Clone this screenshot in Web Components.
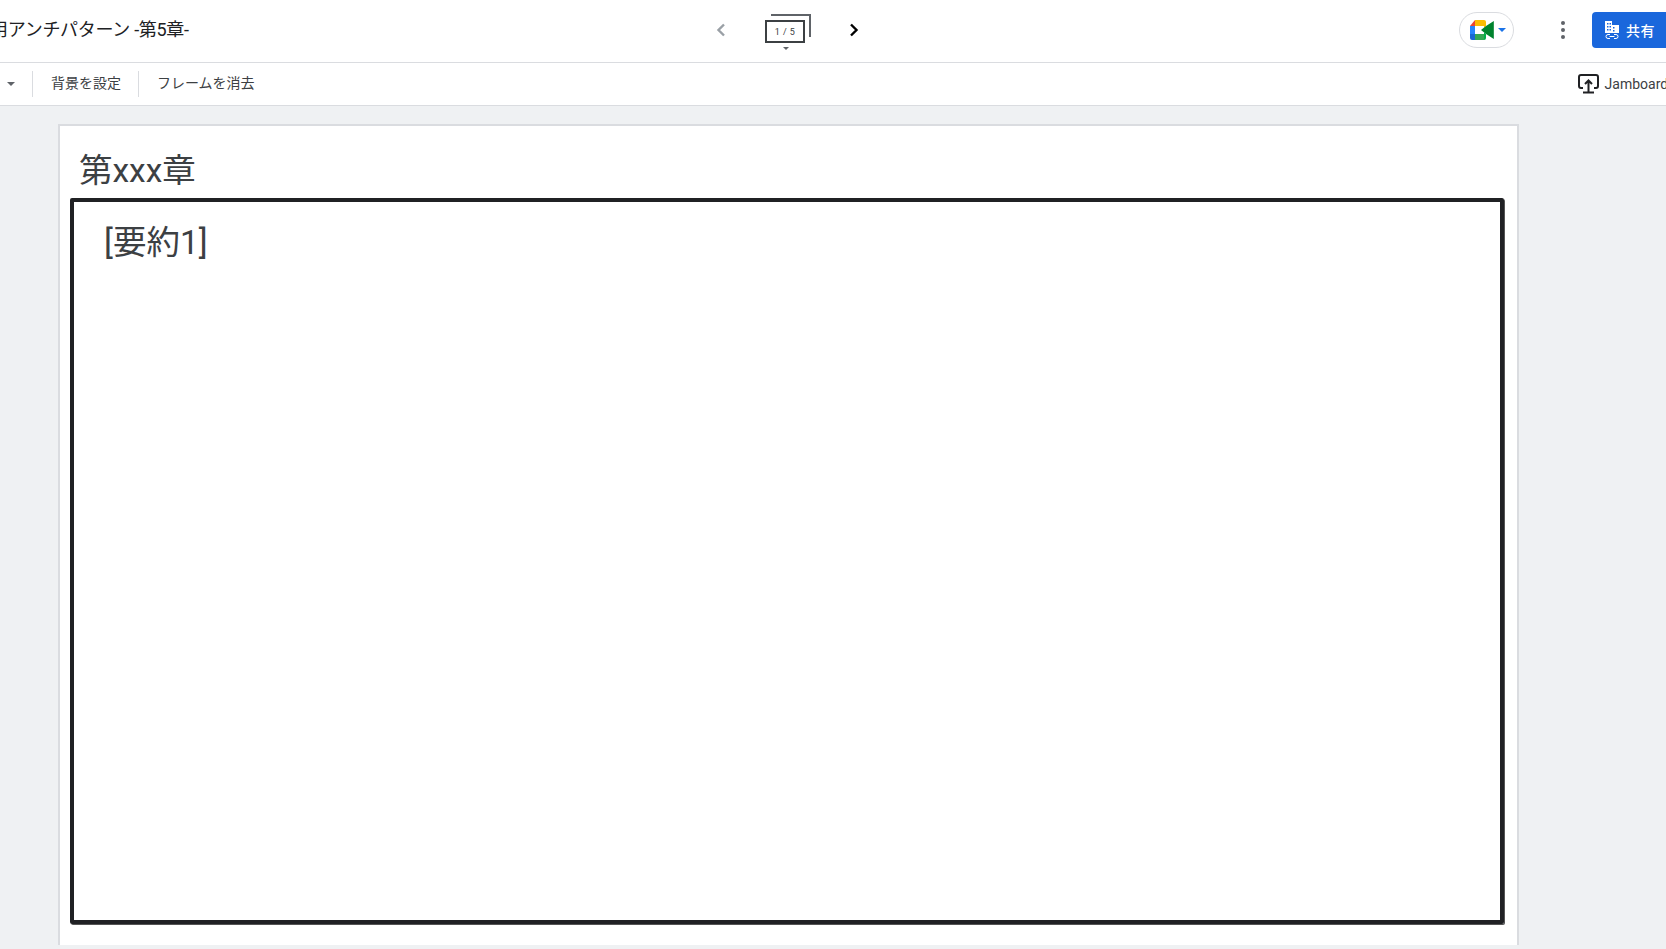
<!DOCTYPE html>
<html lang="ja">
<head>
<meta charset="utf-8">
<title>Jamboard</title>
<style>
  html, body { margin: 0; height: 100%; overflow: hidden; background: #eff1f3; }
  body { font-family: Roboto, "Noto Sans CJK JP", sans-serif; color: #3c4043; }
</style>
</head>
<body>
<jam-app>
  <jam-topbar slot="top" doc-title="用アンチパターン -第5章-" page="1 / 5"></jam-topbar>
  <jam-toolbar slot="tools">
    <span slot="actions">背景を設定</span>
    <span slot="actions">フレームを消去</span>
  </jam-toolbar>
  <jam-stage>
    <span slot="title">第xxx章</span>
    <span slot="body">[要約1]</span>
  </jam-stage>
</jam-app>

<script>
class JamApp extends HTMLElement {
  constructor() {
    super();
    this.attachShadow({ mode: 'open' });
    this.shadowRoot.innerHTML = `
      <style>
        :host {
          display: flex;
          flex-direction: column;
          width: 1666px;
          height: 949px;
          overflow: hidden;
        }
      </style>
      <slot name="top"></slot>
      <slot name="tools"></slot>
      <slot></slot>
    `;
  }
}

class JamTopbar extends HTMLElement {
  constructor() {
    super();
    this.attachShadow({ mode: 'open' });
    const title = this.getAttribute('doc-title');
    const page = this.getAttribute('page');
    this.shadowRoot.innerHTML = `
      <style>
        :host {
          display: flex;
          align-items: center;
          flex: none;
          height: 62px;
          background: #fff;
          border-bottom: 1px solid #dadce0;
          overflow: hidden;
        }
        #title {
          flex: none;
          width: 200px;
          height: 30px;
          margin: 0 0 3px -10px;
          font-size: 18px;
          line-height: 30px;
          letter-spacing: -0.3px;
          color: #202124;
          white-space: nowrap;
        }
        #nav {
          flex: none;
          display: flex;
          align-items: center;
          margin: 0 0 2px 525px;
        }
        #nav svg { display: block; }
        #frames {
          position: relative;
          width: 46px;
          height: 40px;
          margin: 0 37px 0 38px;
        }
        #frames .back {
          position: absolute;
          top: 4px;
          left: 6px;
          width: 38px;
          height: 21px;
          border: solid #5f6368;
          border-width: 2px 2px 0 0;
        }
        #frames .front {
          position: absolute;
          top: 10px;
          left: 0;
          width: 36px;
          height: 19px;
          border: 2px solid #3c4043;
          background: #fff;
          display: flex;
          align-items: center;
          justify-content: center;
          font-size: 9px;
          letter-spacing: 0.4px;
          color: #3c4043;
        }
        #frames .caret {
          position: absolute;
          top: 37px;
          left: 18px;
          border: 3px solid transparent;
          border-top: 3px solid #5f6368;
        }
        #meet {
          flex: none;
          box-sizing: border-box;
          display: flex;
          align-items: center;
          gap: 4px;
          width: 55px;
          height: 36px;
          margin: 0 0 2px 599px;
          padding-left: 10px;
          border: 1px solid #dadce0;
          border-radius: 18px;
        }
        #meet .caret {
          border: 4px solid transparent;
          border-top: 4px solid #1a73e8;
          border-bottom: 0;
        }
        #more {
          flex: none;
          display: flex;
          flex-direction: column;
          gap: 3px;
          margin: 0 0 2px 47px;
        }
        #more i {
          width: 4px;
          height: 4px;
          border-radius: 50%;
          background: #5f6368;
        }
        #share {
          flex: none;
          box-sizing: border-box;
          display: flex;
          align-items: center;
          gap: 7px;
          width: 90px;
          height: 36px;
          margin: 0 0 2px 27px;
          padding-left: 13px;
          background: #1a67dc;
          border-radius: 4px;
          color: #fff;
          font-size: 14px;
          font-weight: 500;
          letter-spacing: 0.5px;
        }
      </style>
      <div id="title">${title}</div>
      <div id="nav">
        <svg width="12" height="14" viewBox="0 0 12 14"><path d="M9 1.500 3.500 7 9 12.500" fill="none" stroke="#9aa0a6" stroke-width="2.400"/></svg>
        <div id="frames">
          <div class="back"></div>
          <div class="front">${page}</div>
          <div class="caret"></div>
        </div>
        <svg width="12" height="14" viewBox="0 0 12 14"><path d="M3 1.500 8.500 7 3 12.500" fill="none" stroke="#000" stroke-width="2.400"/></svg>
      </div>
      <div id="meet">
        <svg width="24" height="20" viewBox="0 0 24 20">
          <path d="M5 0h9v6H5z" fill="#fbbc04"/>
          <path d="M0 6 5 0v6z" fill="#ea4335"/>
          <path d="M0 6h5v8H0z" fill="#2684fc"/>
          <path d="M0 14h5v6H2a2 2 0 0 1-2-2z" fill="#1967d2"/>
          <path d="M5 14h9v6H5z" fill="#34a853"/>
          <path d="M14 0a2 2 0 0 1 2 2v4l-2 2V0z" fill="#fbbc04"/>
          <path d="M16 6 23.800 1v18L16 14l-5-4z" fill="#00832d"/>
          <path d="M14 12l2 2v4a2 2 0 0 1-2 2z" fill="#00ac47"/>
        </svg>
        <div class="caret"></div>
      </div>
      <div id="more"><i></i><i></i><i></i></div>
      <div id="share">
        <svg width="14" height="18" viewBox="0 0 14 18" fill="#fff">
          <path d="M0 0h7v4h7v8H0zM2 2v1.500h1.500V2zM4.500 2v1.500H6V2zM2 5v1.500h1.500V5zM4.500 5v1.500H6V5zM2 8v1.500h1.500V8zM4.500 8v1.500H6V8zM8 6v1.500h1.500V6zM8 9v1.500h1.500V9z" fill-rule="evenodd"/>
          <path d="M5 13.500H3a2 2 0 0 0 0 4h2M9 13.500h2a2 2 0 0 1 0 4H9M4.500 15.500h5" fill="none" stroke="#fff" stroke-width="1"/>
        </svg>
        <span>共有</span>
      </div>
    `;
  }
}

class JamToolbar extends HTMLElement {
  constructor() {
    super();
    this.attachShadow({ mode: 'open' });
    this.shadowRoot.innerHTML = `
      <style>
        :host {
          display: flex;
          align-items: center;
          flex: none;
          height: 42px;
          background: #fff;
          border-bottom: 1px solid #dadce0;
          overflow: hidden;
          font-size: 14px;
          color: #3c4043;
        }
        #caret {
          flex: none;
          margin-left: 7px;
          border: 4px solid transparent;
          border-top: 4px solid #5f6368;
          border-bottom: 0;
        }
        #actions {
          display: flex;
          align-items: center;
          flex: none;
          margin-left: 17px;
          height: 26px;
        }
        ::slotted(span) {
          display: flex;
          align-items: center;
          box-sizing: border-box;
          height: 26px;
          padding: 0 17px 4px 18px;
          border-left: 1px solid #dadce0;
        }
        #cast {
          flex: none;
          display: flex;
          align-items: center;
          gap: 6px;
          margin-left: 1306px;
          white-space: nowrap;
        }
        #cast span { margin-bottom: 1px; }
        #cast svg { display: block; }
      </style>
      <div id="caret"></div>
      <div id="actions"><slot name="actions"></slot></div>
      <div id="cast">
        <svg width="21" height="20" viewBox="0 0 21 20" fill="none" stroke="#202124" stroke-width="2">
          <path d="M5 14H3a2 2 0 0 1-2-2V3a2 2 0 0 1 2-2h15a2 2 0 0 1 2 2v9a2 2 0 0 1-2 2h-2"/>
          <path d="M10.500 18V7M7 10l3.500-3.500L14 10M5 18.500h11"/>
        </svg>
        <span>Jamboard</span>
      </div>
    `;
  }
}

class JamStage extends HTMLElement {
  constructor() {
    super();
    this.attachShadow({ mode: 'open' });
    this.shadowRoot.innerHTML = `
      <style>
        :host {
          display: block;
          flex: none;
          height: 844px;
          padding: 18px 0 0 58px;
          background: #eff1f3;
          box-sizing: border-box;
        }
        #sheet {
          box-sizing: border-box;
          display: flex;
          flex-direction: column;
          width: 1461px;
          height: 821px;
          padding: 0 12px 0 10px;
          background: #fff;
          border: solid #dadce0;
          border-width: 2px 2px 0 2px;
        }
        #title {
          height: 72px;
          flex: none;
          padding: 9px 0 0 9px;
          box-sizing: border-box;
          font-size: 33.500px;
          line-height: 72px;
          color: #3c4043;
        }
        #frame {
          box-sizing: border-box;
          width: 1434px;
          height: 726px;
          padding: 16px 0 0 30px;
          border: 4px solid #202124;
          border-radius: 2px;
          box-shadow: 1px 1px 0 #555;
          font-size: 33.500px;
          line-height: 50px;
          color: #3c4043;
        }
      </style>
      <div id="sheet">
        <div id="title"><slot name="title"></slot></div>
        <div id="frame"><slot name="body"></slot></div>
      </div>
    `;
  }
}

customElements.define('jam-app', JamApp);
customElements.define('jam-topbar', JamTopbar);
customElements.define('jam-toolbar', JamToolbar);
customElements.define('jam-stage', JamStage);
</script>
</body>
</html>
